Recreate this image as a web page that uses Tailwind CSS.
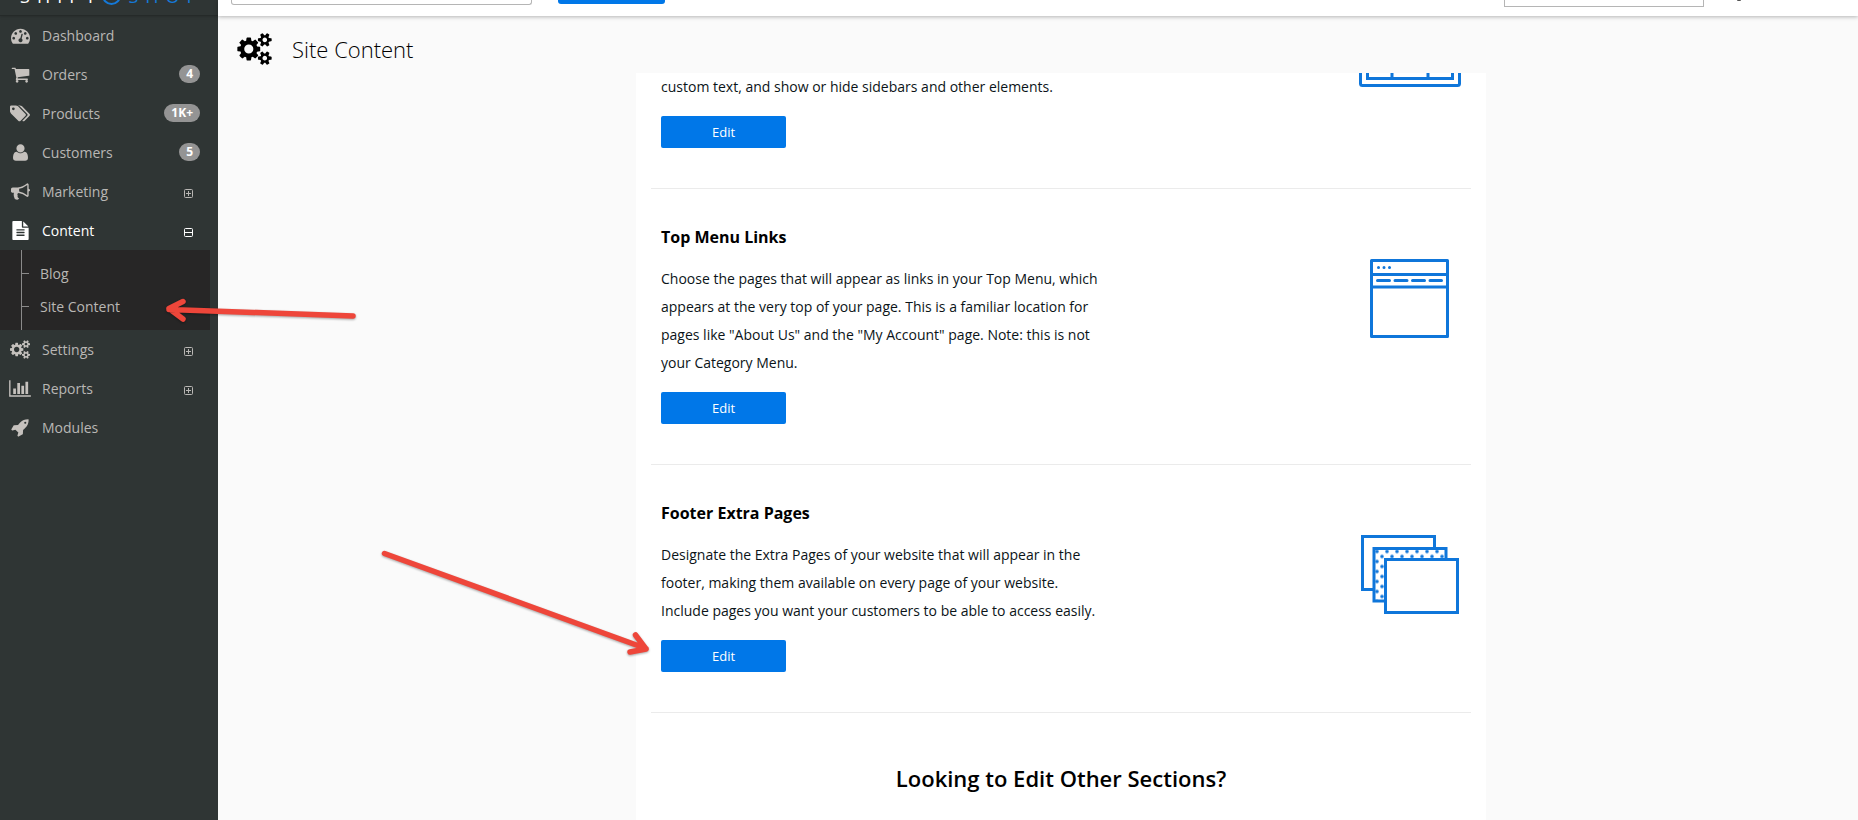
<!DOCTYPE html>
<html lang="en">
<head>
<meta charset="utf-8">
<title>Site Content</title>
<script src="https://cdn.jsdelivr.net/npm/@tailwindcss/browser@4"></script>
</head>
<body class="relative flex h-screen overflow-hidden bg-[#fafafa] font-['Open_Sans',sans-serif] text-sm text-[#0b1418]">

<svg class="hidden" aria-hidden="true">
  <symbol id="cogs" viewBox="0 0 1920 1792"><path d="M896 896q0-106-75-181t-181-75-181 75-75 181 75 181 181 75 181-75 75-181zm768 512q0-52-38-90t-90-38-90 38-38 90q0 53 37.5 90.5t90.5 37.5 90.5-37.5 37.5-90.5zm0-1024q0-52-38-90t-90-38-90 38-38 90q0 53 37.5 90.5t90.5 37.5 90.5-37.5 37.5-90.5zm-384 421v185q0 10-7 19.5t-16 10.5l-155 24q-11 35-32 76 34 48 90 115 7 11 7 20 0 12-7 19-23 30-82.5 89.5t-78.5 59.5q-11 0-21-7l-115-90q-37 19-77 31-11 108-23 155-7 24-30 24h-186q-11 0-20-7.5t-10-17.5l-23-153q-34-10-75-31l-118 89q-7 7-20 7-11 0-21-8-144-133-144-160 0-9 7-19 10-14 41-53t47-61q-23-44-35-82l-152-24q-10-1-17-9.5t-7-19.5v-185q0-10 7-19.5t16-10.5l155-24q11-35 32-76-34-48-90-115-7-11-7-20 0-12 7-20 22-30 82-89t79-59q11 0 21 7l115 90q34-18 77-32 11-108 23-154 7-24 30-24h186q11 0 20 7.5t10 17.5l23 153q34 10 75 31l118-89q8-7 20-7 11 0 21 8 144 133 144 160 0 8-7 19-12 16-42 54t-45 60q23 48 34 82l152 23q10 2 17 10.5t7 19.5zm640 533v140q0 16-149 31-12 27-30 52 51 113 51 138 0 4-4 7-122 71-124 71-8 0-46-47t-52-68q-20 2-30 2t-30-2q-14 21-52 68t-46 47q-2 0-124-71-4-3-4-7 0-25 51-138-18-25-30-52-149-15-149-31v-140q0-16 149-31 13-29 30-52-51-113-51-138 0-4 4-7 4-2 35-20t59-34 30-16q8 0 46 46.5t52 67.5q20-2 30-2t30 2q51-71 92-112l6-2q4 0 124 70 4 3 4 7 0 25-51 138 17 23 30 52 149 15 149 31zm0-1024v140q0 16-149 31-12 27-30 52 51 113 51 138 0 4-4 7-122 71-124 71-8 0-46-47t-52-68q-20 2-30 2t-30-2q-14 21-52 68t-46 47q-2 0-124-71-4-3-4-7 0-25 51-138-18-25-30-52-149-15-149-31v-140q0-16 149-31 13-29 30-52-51-113-51-138 0-4 4-7 4-2 35-20t59-34 30-16q8 0 46 46.5t52 67.5q20-2 30-2t30 2q51-71 92-112l6-2q4 0 124 70 4 3 4 7 0 25-51 138 17 23 30 52 149 15 149 31z"/></symbol>
  <symbol id="plus" viewBox="0 0 9 9"><path fill="none" stroke="currentColor" d="M1.5.5h6a1 1 0 0 1 1 1v6a1 1 0 0 1-1 1h-6a1 1 0 0 1-1-1v-6a1 1 0 0 1 1-1zM2 4.5h5M4.5 2v5"/></symbol>
  <symbol id="minus" viewBox="0 0 9 9"><path fill="none" stroke="currentColor" d="M1.5.5h6a1 1 0 0 1 1 1v6a1 1 0 0 1-1 1h-6a1 1 0 0 1-1-1v-6a1 1 0 0 1 1-1zM1 4.5h7"/></symbol>
</svg>

<aside class="flex w-[218px] shrink-0 flex-col bg-[#2f3534] text-[#b9b7b4]">
  <div class="flex h-4 shrink-0 items-end overflow-hidden border-b border-black/20 pb-[10px] pl-5 text-lg leading-[18px] whitespace-nowrap shadow-sm">
    <a href="#" class="flex items-end gap-[7px] text-white" aria-label="Shift4Shop">
      <span>S</span><span>H</span><span>I</span><span>F</span><span>T</span>
      <svg class="h-[19px] w-[19px]" viewBox="0 0 19 19" fill="none" stroke="#1579d8" stroke-width="2"><circle cx="9.500" cy="9.500" r="8.500"/><path d="M11.500 14V5l-6 6.500h8"/></svg>
      <span class="text-[#1579d8]">S</span><span class="text-[#1579d8]">H</span><span class="text-[#1579d8]">O</span><span class="text-[#1579d8]">P</span>
    </a>
  </div>
  <nav>
    <ul>
      <li><a href="#" class="flex h-[39px] items-center gap-[11px] pr-[18px] pl-[9px]">
        <span class="flex w-[22px] shrink-0 justify-center"><svg class="h-[19px] w-[19px] fill-[#c5c1bd]" viewBox="0 0 1792 1792"><path d="M384 1152q0-53-37.5-90.5t-90.5-37.5-90.5 37.5-37.5 90.5 37.5 90.5 90.5 37.5 90.5-37.5 37.5-90.5zm192-448q0-53-37.5-90.5t-90.5-37.5-90.5 37.5-37.5 90.5 37.5 90.5 90.5 37.5 90.5-37.5 37.5-90.5zm428 481l101-382q6-26-7.5-48.5t-38.5-29.5-48 6.5-30 39.5l-101 382q-60 5-107 43.5t-63 98.5q-20 77 20 146t117 89 146-20 89-117q16-60-6-117t-72-91zm660-33q0-53-37.5-90.5t-90.5-37.5-90.5 37.5-37.5 90.5 37.5 90.5 90.5 37.5 90.5-37.5 37.5-90.5zm-640-640q0-53-37.5-90.5t-90.5-37.5-90.5 37.5-37.5 90.5 37.5 90.5 90.5 37.5 90.5-37.5 37.5-90.5zm448 192q0-53-37.5-90.5t-90.5-37.5-90.5 37.5-37.5 90.5 37.5 90.5 90.5 37.5 90.5-37.5 37.5-90.5zm320 448q0 261-141 483-19 29-54 29h-1402q-35 0-54-29-141-221-141-483 0-182 71-348t191-286 286-191 348-71 348 71 286 191 191 286 71 348z"/></svg></span>
        <span>Dashboard</span></a></li>
      <li><a href="#" class="flex h-[39px] items-center gap-[11px] pr-[18px] pl-[9px]">
        <span class="flex w-[22px] shrink-0 justify-center"><svg class="h-[19px] w-[19px] fill-[#c5c1bd]" viewBox="0 0 1792 1792"><path d="M704 1536q0 52-38 90t-90 38-90-38-38-90 38-90 90-38 90 38 38 90zm896 0q0 52-38 90t-90 38-90-38-38-90 38-90 90-38 90 38 38 90zm128-1088v512q0 24-16.500 42.500t-40.500 21.500l-1044 122q13 60 13 70 0 16-24 64h920q26 0 45 19t19 45-19 45-45 19h-1024q-26 0-45-19t-19-45q0-11 8-31.500t16-36 21.500-40 15.500-29.500l-177-823h-204q-26 0-45-19t-19-45 19-45 45-19h256q16 0 28.500 6.500t19.500 15.500 13 24.500 8 26 5.500 29.500 4.500 26h1201q26 0 45 19t19 45z"/></svg></span>
        <span>Orders</span><span class="mb-px ml-auto rounded-full bg-[#949494] px-[7px] text-xs leading-[18px] font-bold text-white">4</span></a></li>
      <li><a href="#" class="flex h-[39px] items-center gap-[11px] pr-[18px] pl-[9px]">
        <span class="flex w-[22px] shrink-0 justify-center"><svg class="h-[19px] w-[20px] fill-[#c5c1bd]" viewBox="0 0 1899 1792"><path d="M448 448q0-53-37.5-90.5t-90.500-37.500-90.500 37.500-37.500 90.500 37.500 90.500 90.500 37.500 90.500-37.500 37.500-90.500zm1067 576q0 53-37 90l-491 492q-39 37-91 37-53 0-90-37l-715-716q-38-37-64.500-101t-26.500-117v-416q0-52 38-90t90-38h416q53 0 117 26.500t102 64.500l715 714q37 39 37 91zm384 0q0 53-37 90l-491 492q-39 37-91 37-36 0-59-14t-53-45l470-470q37-37 37-90 0-52-37-91l-715-714q-38-38-102-64.500t-117-26.500h224q53 0 117 26.500t102 64.500l715 714q37 39 37 91z"/></svg></span>
        <span>Products</span><span class="mb-px ml-auto rounded-full bg-[#949494] px-[7px] text-xs leading-[18px] font-bold text-white">1K+</span></a></li>
      <li><a href="#" class="flex h-[39px] items-center gap-[11px] pr-[18px] pl-[9px]">
        <span class="flex w-[22px] shrink-0 justify-center"><svg class="h-[19px] w-[19px] fill-[#c5c1bd]" viewBox="0 0 1792 1792"><path d="M1600 1405q0 120-73 189.500t-194 69.500h-874q-121 0-194-69.500t-73-189.500q0-53 3.500-103.500t14-109 26.500-108.500 43-97.500 62-81 85.500-53.500 111.500-20q9 0 42 21.500t74.500 48 108 48 133.500 21.500 133.500-21.500 108-48 74.500-48 42-21.500q61 0 111.500 20t85.500 53.500 62 81 43 97.500 26.500 108.500 14 109 3.500 103.500zm-320-893q0 159-112.500 271.500t-271.500 112.500-271.500-112.500-112.500-271.500 112.500-271.500 271.500-112.500 271.500 112.500 112.500 271.500z"/></svg></span>
        <span>Customers</span><span class="mb-px ml-auto rounded-full bg-[#949494] px-[7px] text-xs leading-[18px] font-bold text-white">5</span></a></li>
      <li><a href="#" class="flex h-[39px] items-center gap-[11px] pr-[25px] pl-[9px]">
        <span class="flex w-[22px] shrink-0 justify-center"><svg class="h-[19px] w-[19px] fill-[#c5c1bd]" viewBox="0 0 1792 1792"><path d="M1664 640q53 0 90.500 37.500t37.500 90.500-37.500 90.500-90.500 37.500v384q0 52-38 90t-90 38q-417-347-812-380-58 19-91 66t-31 100.500 40 92.500q-20 33-23 65.500t6 58 33.500 55 48 50 61.500 50.500q-29 58-111.500 83t-168.500 11.500-132-55.500q-7-23-29.500-87.500t-32-94.500-23-89-15-101 3.500-98.500 22-110.500h-122q-66 0-113-47t-47-113v-192q0-66 47-113t113-47h480q435 0 896-384 52 0 90 38t38 90v384zm-128 604v-954q-394 302-768 343v270q377 42 768 341z"/></svg></span>
        <span>Marketing</span><svg class="mt-[3px] ml-auto h-[9px] w-[9px]"><use href="#plus"/></svg></a></li>
      <li><a href="#" class="flex h-[39px] items-center gap-[11px] pr-[25px] pl-[9px] text-white">
        <span class="flex w-[22px] shrink-0 justify-center"><svg class="h-[19px] w-[19px] fill-white" viewBox="0 0 1792 1792"><path d="M1596 476q14 14 28 36h-472v-472q22 14 36 28zm-476 164h544v1056q0 40-28 68t-68 28h-1344q-40 0-68-28t-28-68v-1600q0-40 28-68t68-28h800v544q0 40 28 68t68 28zm160 736v-64q0-14-9-23t-23-9h-704q-14 0-23 9t-9 23v64q0 14 9 23t23 9h704q14 0 23-9t9-23zm0-256v-64q0-14-9-23t-23-9h-704q-14 0-23 9t-9 23v64q0 14 9 23t23 9h704q14 0 23-9t9-23zm0-256v-64q0-14-9-23t-23-9h-704q-14 0-23 9t-9 23v64q0 14 9 23t23 9h704q14 0 23-9t9-23z"/></svg></span>
        <span>Content</span><svg class="mt-[3px] ml-auto h-[9px] w-[9px]"><use href="#minus"/></svg></a>
        <div class="mr-2 bg-[#272626] pl-[21px]">
          <ul class="border-l border-[#8a8a8a] py-[7px]">
            <li><a href="#" class="flex h-[33px] items-center gap-[11px]"><span class="h-px w-[7px] bg-[#8a8a8a]"></span>Blog</a></li>
            <li><a href="#" class="flex h-[33px] items-center gap-[11px]"><span class="h-px w-[7px] bg-[#8a8a8a]"></span>Site Content</a></li>
          </ul>
        </div></li>
      <li><a href="#" class="flex h-[39px] items-center gap-[11px] pr-[25px] pl-[9px]">
        <span class="flex w-[22px] shrink-0 justify-center"><svg class="h-[19px] w-[20px] fill-[#c5c1bd]"><use href="#cogs"/></svg></span>
        <span>Settings</span><svg class="mt-[3px] ml-auto h-[9px] w-[9px]"><use href="#plus"/></svg></a></li>
      <li><a href="#" class="flex h-[39px] items-center gap-[11px] pr-[25px] pl-[9px]">
        <span class="flex w-[22px] shrink-0 justify-center"><svg class="h-[19px] w-[22px] fill-[#c5c1bd]" viewBox="0 0 2048 1792"><path d="M640 896v512h-256v-512h256zm384-512v1024h-256v-1024h256zm1024 1152v128h-2048v-1536h128v1408h1920zm-640-896v768h-256v-768h256zm384-384v1152h-256v-1152h256z"/></svg></span>
        <span>Reports</span><svg class="mt-[3px] ml-auto h-[9px] w-[9px]"><use href="#plus"/></svg></a></li>
      <li><a href="#" class="flex h-[39px] items-center gap-[11px] pr-[25px] pl-[9px]">
        <span class="flex w-[22px] shrink-0 justify-center"><svg class="h-[19px] w-[19px] fill-[#c5c1bd]" viewBox="0 0 1792 1792"><path d="M1440 448q0-40-28-68t-68-28-68 28-28 68 28 68 68 28 68-28 28-68zm224-288q0 249-75.500 430.500t-253.500 360.500q-81 80-195 176l-20 379q-2 16-16 26l-384 224q-7 4-16 4-12 0-23-9l-64-64q-13-14-8-32l85-276-281-281-276 85q-3 1-9 1-14 0-23-9l-64-64q-17-19-5-39l224-384q10-14 26-16l379-20q96-114 176-195 188-187 358-258t431-71q14 0 24 9.500t10 22.500z"/></svg></span>
        <span>Modules</span></a></li>
    </ul>
  </nav>
</aside>

<div class="flex min-w-0 flex-1 flex-col">
  <header class="z-10 flex h-4 shrink-0 items-start bg-white pr-[115px] pl-[13px] shadow-[0_1px_4px_rgba(0,0,0,0.28)]">
    <input type="text" aria-label="Search" class="h-[5px] w-[301px] rounded-b-[3px] border border-t-0 border-[#b5b5b5]">
    <button type="button" aria-label="Search" class="ml-[26px] h-1 w-[107px] rounded-b-[3px] bg-[#0077e8]"></button>
    <select aria-label="Store" class="ml-auto h-[7px] w-[200px] appearance-none border border-t-0 border-[#b5b5b5]"></select>
    <span class="mr-[2px] ml-[33px] h-px w-1 rounded-b-full bg-[#555]"></span>
  </header>

  <main class="flex min-h-0 flex-1 flex-col">
    <div class="flex h-[57px] shrink-0 items-center gap-5 pt-2 pl-[19px]">
      <svg class="h-8 w-[35px] fill-black"><use href="#cogs"/></svg>
      <h1 class="text-[22px] leading-8 font-light text-black">Site Content</h1>
    </div>

    <div class="flex min-h-0 flex-1 justify-center overflow-hidden pl-[46px]">
      <div class="w-full max-w-[850px] bg-white px-[15px]">
        <section class="flex items-start justify-between border-b border-[#ebebeb] px-[10px] pb-10">
          <div class="w-[440px]">
            <p class="leading-7">custom text, and show or hide sidebars and other elements.</p>
            <button type="button" class="mt-[15px] block h-8 w-[125px] rounded-[2px] bg-[#0077e8] text-[13px] text-white">Edit</button>
          </div>
          <svg class="h-[14px] w-[102px]" viewBox="0 0 102 14" fill="none" stroke="#0f76da" stroke-width="3"><path d="M1.500 0v10.500a2 2 0 0 0 2 2h95a2 2 0 0 0 2-2V0M8.500 0v5.500h85V0M33 0v5M69 0v5"/></svg>
        </section>

        <section class="flex items-start justify-between border-b border-[#ebebeb] px-[10px] pt-[34px] pb-10">
          <div class="w-[440px]">
            <h2 class="text-base leading-7 font-bold text-black">Top Menu Links</h2>
            <p class="mt-[14px] leading-7">Choose the pages that will appear as links in your Top Menu, which appears at the very top of your page. This is a familiar location for pages like "About Us" and the "My Account" page. Note: this is not your Category Menu.</p>
            <button type="button" class="mt-[15px] block h-8 w-[125px] rounded-[2px] bg-[#0077e8] text-[13px] text-white">Edit</button>
          </div>
          <svg class="mt-9 mr-3 h-[79px] w-[79px]" viewBox="0 0 79 79" fill="none" stroke="#0f76da" stroke-width="3"><path stroke-linejoin="round" d="M1.500 1.500h76v76h-76zM2 15.500h75M2 28h75"/><path stroke-linecap="round" d="M7.500 21.500h12M25 21.500h12M42.500 21.500h12M60 21.500h11.500"/><path stroke-linecap="round" d="M8.500 8.500h.01M14 8.500h.01M19.500 8.500h.01"/></svg>
        </section>

        <section class="flex items-start justify-between border-b border-[#ebebeb] px-[10px] pt-[34px] pb-10">
          <div class="w-[440px]">
            <h2 class="text-base leading-7 font-bold text-black">Footer Extra Pages</h2>
            <p class="mt-[14px] leading-7">Designate the Extra Pages of your website that will appear in the footer, making them available on every page of your website. Include pages you want your customers to be able to access easily.</p>
            <button type="button" class="mt-[15px] block h-8 w-[125px] rounded-[2px] bg-[#0077e8] text-[13px] text-white">Edit</button>
          </div>
          <svg class="mt-9 mr-[2px] h-[79px] w-[98px]" viewBox="0 0 98 79" fill="#fff" stroke="#0f76da" stroke-width="3">
            <defs><pattern id="dots" width="10" height="10" x="11" y="11.500" patternUnits="userSpaceOnUse"><rect width="10" height="10" fill="#fff" stroke="none"/><g fill="#0f76da" stroke="none"><circle cx="5" cy="5" r="1.800"/><circle cx="0" cy="0" r="1.800"/><circle cx="10" cy="0" r="1.800"/><circle cx="0" cy="10" r="1.800"/><circle cx="10" cy="10" r="1.800"/></g></pattern></defs>
            <path d="M1.500 1.500h72v53h-72z"/><path fill="url(#dots)" d="M13 13.500h72v52.500H13z"/><path d="M24.500 24.500h72v53h-72z"/>
          </svg>
        </section>

        <h2 class="pt-[47px] text-center text-[22px] leading-9 font-semibold text-black">Looking to Edit Other Sections?</h2>
      </div>
    </div>
  </main>
</div>

<!-- Annotation arrows drawn over the page -->
<svg class="pointer-events-none absolute top-0 left-0 z-20 h-full w-full drop-shadow-[0_1px_1px_rgba(0,0,0,0.35)]" fill="none" stroke="#ee463a" stroke-width="5.500" stroke-linecap="round" stroke-linejoin="round">
  <path d="M353 316 169 309.500M183 301.500 169 308.500 183 319"/>
  <path d="M384.500 553.500 646 648.500M635.500 635 646 649 630 652"/>
</svg>
</body>
</html>
